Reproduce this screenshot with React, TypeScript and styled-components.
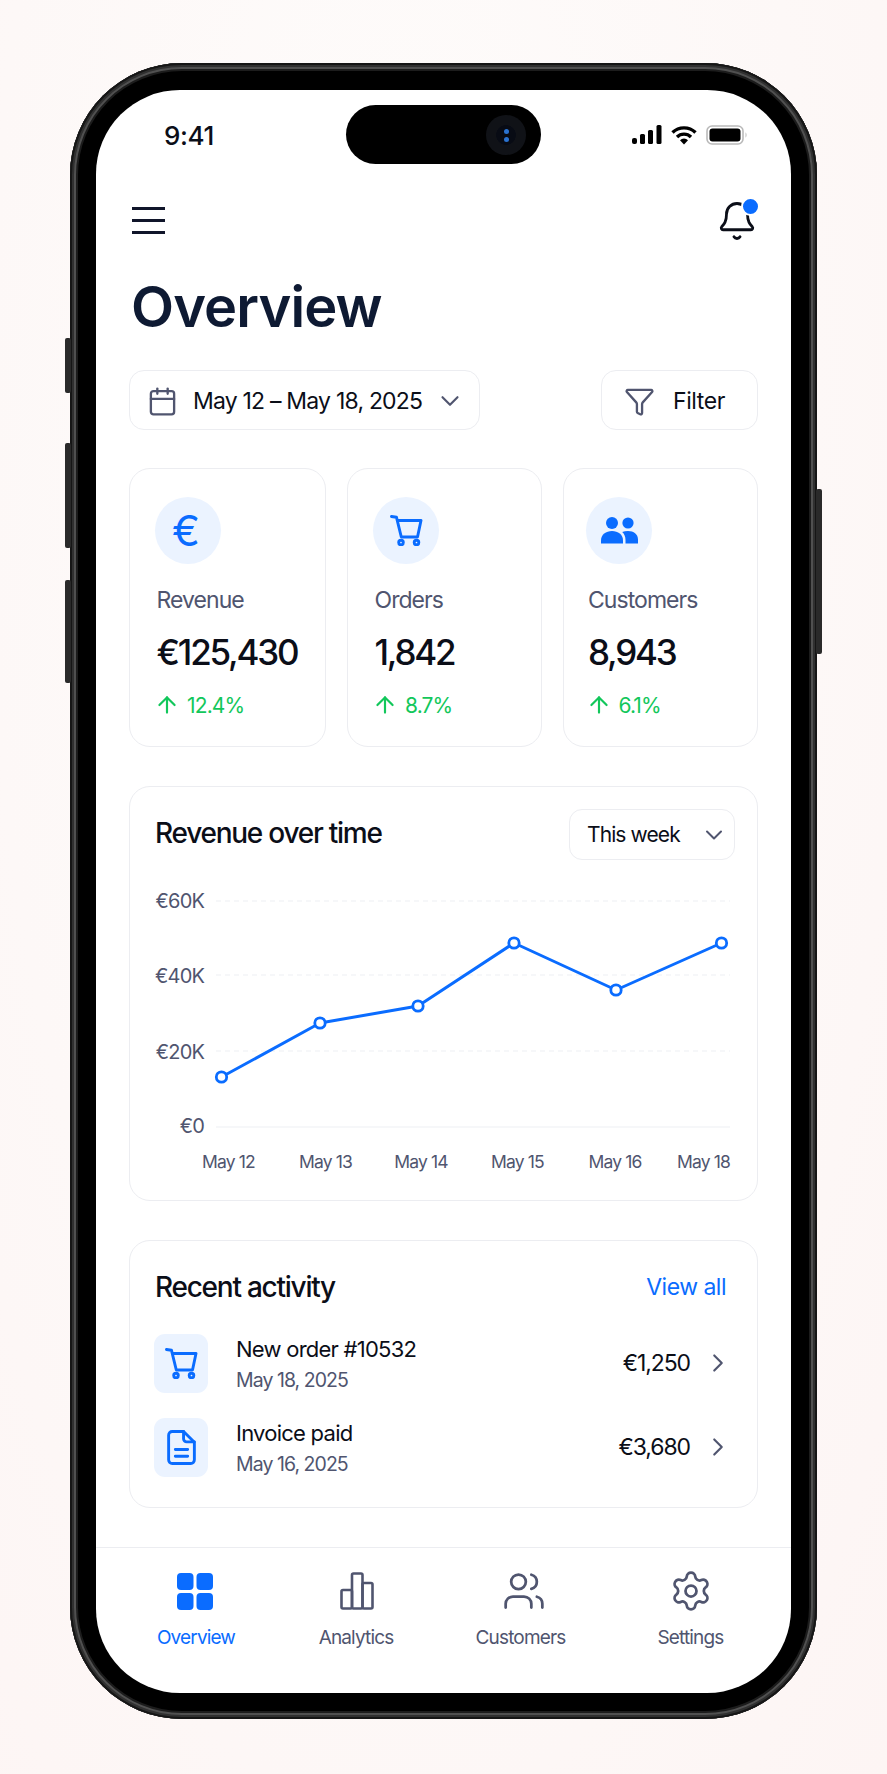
import React from 'react';
import styled, { createGlobalStyle } from 'styled-components';
import { ArrowUp, Calendar, ChevronDown, ChevronRight, Funnel, Bell, Settings, Users } from 'lucide-react';

const Global = createGlobalStyle`
  html, body { margin: 0; padding: 0; }
  body { font-family: Inter, "Noto Sans", sans-serif; background: #fff; }
  * { box-sizing: border-box; }
`;

const BLUE = '#0a6cff';
const MUTED = '#50556f';
const INK = '#0b0e18';
const LINE = '#ecedf1';
const TILE = '#ebf3ff';

const Page = styled.div`
  width: 887px;
  height: 1774px;
  padding: 63px 0 0 70px;
  overflow: hidden;
  background: radial-gradient(ellipse at 45% 25%, #fefcfb 0%, #fdf8f7 60%, #fdf5f4 100%);
`;
const Frame = styled.div`
  position: relative;
  width: 747px;
  height: 1656px;
  padding: 27px 26px 26px;
  border-radius: 112px;
  background: #000;
  box-shadow: inset 0 0 0 2px #161616, inset 0 0 0 4px #303030, inset 0 0 0 6px #505050, inset 0 0 0 8px #1c1c1c;
`;
const SideButton = styled.div<{ $top: number; $height: number; $right?: boolean }>`
  position: absolute;
  top: ${p => p.$top}px;
  height: ${p => p.$height}px;
  width: 6px;
  ${p => (p.$right ? 'right: -5px;' : 'left: -5px;')}
  border-radius: 2px;
  background: #2a2a2a;
`;
const Screen = styled.div`
  position: relative;
  width: 695px;
  height: 1603px;
  border-radius: 84px;
  background: #fff;
  overflow: hidden;
  display: flex;
  flex-direction: column;
`;
const Island = styled.div`
  position: absolute;
  top: 15px;
  left: 250px;
  width: 195px;
  height: 59px;
  border-radius: 30px;
  background: #000;
`;
const Lens = styled.div`
  position: absolute;
  top: 10px;
  right: 15px;
  width: 40px;
  height: 40px;
  border-radius: 50%;
  background: radial-gradient(circle, #080b14 0 34%, #101217 36% 100%);
  display: flex;
  flex-direction: column;
  align-items: center;
  justify-content: center;
  gap: 3px;
`;
const LensDot = styled.span`
  width: 5px;
  height: 5px;
  border-radius: 50%;
  background: #2a72d0;
`;
const StatusBar = styled.div`
  flex: none;
  height: 90px;
  padding: 0 43px 0 68px;
  display: flex;
  align-items: center;
  justify-content: space-between;
`;
const Clock = styled.span`
  font-size: 26px;
  font-weight: 500;
  color: ${INK};
  letter-spacing: -0.4px;
`;
const StatusIcons = styled.div`
  display: flex;
  align-items: center;
  gap: 9px;
`;
const Main = styled.div`
  flex: 1;
  padding: 22px 33px 0;
`;
const TopRow = styled.div`
  height: 38px;
  display: flex;
  align-items: center;
  justify-content: space-between;
`;
const Burger = styled.svg`
  margin: 0 0 2px 3px;
  display: block;
`;
const BellWrap = styled.div`
  position: relative;
  width: 42px;
  height: 42px;
  color: ${INK};
`;
const BellDot = styled.span`
  position: absolute;
  top: -3px;
  right: -2px;
  width: 19px;
  height: 19px;
  border: 2px solid #fff;
  border-radius: 50%;
  background: ${BLUE};
`;
const Title = styled.h1`
  margin: 39px 0 0 2px;
  font-size: 56px;
  line-height: 56px;
  font-weight: 600;
  letter-spacing: -0.9px;
  color: #0e1a33;
`;
const ToolRow = styled.div`
  margin-top: 35px;
  display: flex;
  justify-content: space-between;
`;
const ToolButton = styled.div<{ $width: number }>`
  width: ${p => p.$width}px;
  height: 60px;
  padding-top: 2px;
  border: 1.5px solid ${LINE};
  border-radius: 15px;
  display: flex;
  align-items: center;
  color: ${MUTED};
`;
const DateIcon = styled.span`
  display: flex;
  margin-left: 17px;
`;
const FilterIcon = styled.span`
  display: flex;
  margin-left: 22px;
`;
const ToolText = styled.span<{ $gap: number; $track: number }>`
  margin-left: ${p => p.$gap}px;
  font-size: 23px;
  letter-spacing: ${p => p.$track}px;
  color: ${INK};
`;
const ToolChevron = styled.span`
  display: flex;
  margin-left: auto;
  margin-right: 14px;
  color: ${MUTED};
`;
const Stats = styled.div`
  margin-top: 38px;
  display: grid;
  grid-template-columns: 197px 195px 195px;
  gap: 21px;
`;
const Card = styled.div`
  border: 1.5px solid ${LINE};
  border-radius: 21px;
  background: #fff;
`;
const StatCard = styled(Card)<{ $pad: number }>`
  height: 279px;
  padding: 28px 0 0 ${p => p.$pad}px;
`;
const StatCircle = styled.div<{ $shift: number }>`
  width: 66px;
  height: 67px;
  margin-left: ${p => p.$shift}px;
  border-radius: 50%;
  background: ${TILE};
  color: ${BLUE};
  display: flex;
  align-items: center;
  justify-content: center;
`;
const EuroGlyph = styled.span`
  font-size: 42px;
  font-weight: 400;
  line-height: 1;
  margin-left: -4px;
`;
const StatLabel = styled.div`
  margin-top: 21px;
  font-size: 23px;
  line-height: 30px;
  letter-spacing: -0.95px;
  color: ${MUTED};
`;
const StatValue = styled.div`
  margin-top: 17px;
  font-size: 35px;
  line-height: 40px;
  font-weight: 500;
  letter-spacing: -2.2px;
  color: ${INK};
`;
const StatDelta = styled.div`
  margin-top: 19px;
  height: 28px;
  display: flex;
  align-items: center;
  gap: 7px;
  font-size: 21px;
  letter-spacing: -0.85px;
  color: #12c75b;
`;
const DeltaArrow = styled.span`
  display: flex;
  margin-left: -2.5px;
`;
const ChartCard = styled(Card)`
  margin-top: 39px;
  height: 415px;
`;
const ChartHead = styled.div`
  padding: 22px 22px 0 24px;
  display: flex;
  align-items: center;
  justify-content: space-between;
`;
const CardTitle = styled.h2`
  margin: 0 0 3px 1px;
  font-size: 28px;
  line-height: 34px;
  font-weight: 500;
  letter-spacing: -1.25px;
  color: ${INK};
`;
const Select = styled.div`
  width: 166px;
  height: 51px;
  padding-left: 17px;
  border: 1.5px solid ${LINE};
  border-radius: 13px;
  display: flex;
  align-items: center;
  justify-content: space-between;
  font-size: 21px;
  letter-spacing: -0.9px;
  color: ${INK};
`;
const SelectChevron = styled.span`
  display: flex;
  margin-right: 6px;
  color: ${MUTED};
`;
const ChartSvg = styled.svg`
  display: block;
  margin-top: -1px;
`;
const AxisText = styled.text<{ $size: number }>`
  font-family: Inter, sans-serif;
  font-size: ${p => p.$size}px;
  letter-spacing: -0.85px;
  fill: ${MUTED};
  dominant-baseline: central;
`;
const ActivityCard = styled(Card)`
  margin-top: 39px;
  height: 268px;
  padding: 29px 0 0 24px;
`;
const ActivityHead = styled.div`
  padding-right: 31px;
  display: flex;
  align-items: center;
  justify-content: space-between;
`;
const ViewAll = styled.span`
  margin-bottom: 3px;
  font-size: 23px;
  letter-spacing: -0.5px;
  color: ${BLUE};
`;
const Rows = styled.div`
  margin-top: 27px;
  display: flex;
  flex-direction: column;
  gap: 25px;
`;
const Row = styled.div`
  height: 59px;
  padding-right: 24px;
  display: flex;
  align-items: center;
`;
const RowTile = styled.div`
  flex: none;
  width: 54px;
  height: 59px;
  border-radius: 11px;
  background: ${TILE};
  color: ${BLUE};
  display: flex;
  align-items: center;
  justify-content: center;
`;
const RowText = styled.div`
  margin-left: 28px;
  flex: 1;
  align-self: flex-start;
`;
const RowTitle = styled.div`
  font-size: 22px;
  line-height: 30px;
  letter-spacing: -0.75px;
  color: ${INK};
`;
const RowDate = styled.div`
  margin-top: 2px;
  font-size: 19.5px;
  line-height: 28px;
  letter-spacing: -0.95px;
  color: ${MUTED};
`;
const RowAmount = styled.div`
  margin-bottom: 2px;
  font-size: 23px;
  letter-spacing: -1.1px;
  color: ${INK};
`;
const RowChevron = styled.span`
  display: flex;
  margin: 0 0 2px 13px;
  color: ${MUTED};
`;
const Nav = styled.nav`
  flex: none;
  height: 146px;
  padding: 21px 0 0 20px;
  border-top: 1.5px solid ${LINE};
  display: grid;
  grid-template-columns: 160px 160px 169px 171px;
  align-items: start;
`;
const NavItem = styled.div<{ $active?: boolean }>`
  display: flex;
  flex-direction: column;
  align-items: center;
  color: ${p => (p.$active ? BLUE : MUTED)};
`;
const NavIcon = styled.div<{ $shift: number }>`
  height: 44px;
  margin-left: ${p => p.$shift}px;
  display: flex;
  align-items: center;
  justify-content: center;
`;
const NavLabel = styled.span`
  margin-top: 12px;
  font-size: 19px;
  line-height: 26px;
  letter-spacing: -0.85px;
`;

const Signal = () => (
  <svg width="30" height="20" viewBox="0 0 30 20" fill="#000">
    <rect x="0" y="13" width="5" height="6" rx="2" />
    <rect x="8" y="9" width="5" height="10" rx="1.5" />
    <rect x="16" y="5" width="5" height="14" rx="1.5" />
    <rect x="24.5" y="0" width="5" height="19" rx="1.5" />
  </svg>
);
const Wifi = () => (
  <svg width="26" height="20" viewBox="0 0 26 20" fill="none" stroke="#000" strokeWidth="3.4">
    <path d="M1.5 7.5a16.5 16.5 0 0 1 23 0" />
    <path d="M6 12a10 10 0 0 1 14 0" />
    <path d="M13 19.5l-4-4.2a5.6 5.6 0 0 1 8 0z" fill="#000" stroke="none" />
  </svg>
);
const Battery = () => (
  <svg width="42" height="20" viewBox="0 0 42 20">
    <rect x="1" y="1" width="36" height="18" rx="5" fill="none" stroke="#b9b9b9" strokeWidth="1.6" />
    <rect x="3.5" y="3.5" width="31" height="13" rx="3" fill="#000" />
    <path d="M39.5 7.5c1.4.4 1.4 4.6 0 5z" fill="#bdbdbd" />
  </svg>
);
const Cart = () => (
  <svg width="33" height="31" viewBox="0 0 33 31" fill="none" stroke="currentColor" strokeWidth="2.9" strokeLinecap="round" strokeLinejoin="round">
    <path d="M1.500 1.500l5 .8 4.800 19.700h16.200l3.500-16.500H7.500" />
    <circle cx="11" cy="27.500" r="2.300" />
    <circle cx="26.500" cy="27.500" r="2.300" />
  </svg>
);
const Doc = () => (
  <svg width="29" height="35" viewBox="0 0 28 34" fill="none" stroke="currentColor" strokeWidth="2.800" strokeLinecap="round" strokeLinejoin="round">
    <path d="M5 1.500h11l10.500 10.500v17a3.500 3.500 0 0 1-3.500 3.500H5a3.500 3.500 0 0 1-3.500-3.500V5A3.500 3.500 0 0 1 5 1.500z" />
    <path d="M16 1.500v7a3 3 0 0 0 3 3h7.500" />
    <path d="M8 19h12M8 25.500h12" />
  </svg>
);
const UsersSolid = () => (
  <svg width="37" height="27" viewBox="0 0 37 27" fill={BLUE}>
    <circle cx="11" cy="6" r="6" />
    <circle cx="27" cy="6" r="5.600" />
    <path d="M0 26.500v-3C0 17.500 5 14 11 14s11 3.500 11 9.500v3z" />
    <path d="M24.500 26.500v-3.500c0-3.500-1.200-6-3.300-8 1.700-.7 3.700-1 5.800-1 5.700 0 10 3 10 8.500v4z" />
  </svg>
);
const GridIcon = () => (
  <svg width="36" height="37" viewBox="0 0 36 37" fill={BLUE}>
    <rect x="0" y="0" width="16.500" height="17" rx="4" />
    <rect x="19.500" y="0" width="16.500" height="17" rx="4" />
    <rect x="0" y="20" width="16.500" height="17" rx="4" />
    <rect x="19.500" y="20" width="16.500" height="17" rx="4" />
  </svg>
);
const BarsIcon = () => (
  <svg width="34" height="38" viewBox="0 0 34 38" fill="none" stroke={MUTED} strokeWidth="2.600" strokeLinejoin="round">
    <rect x="1.500" y="18" width="10.500" height="18.500" rx="1.500" />
    <rect x="12" y="1.500" width="10.500" height="35" rx="1.500" />
    <rect x="22.500" y="11" width="10" height="25.500" rx="1.500" />
  </svg>
);

const gridYs = [42, 116, 192, 268];
const yLabels = [
  { t: '€60K', y: 42 },
  { t: '€40K', y: 117 },
  { t: '€20K', y: 193 },
  { t: '€0', y: 267 },
];
const xLabels = [
  { t: 'May 12', x: 97.5 },
  { t: 'May 13', x: 194.5 },
  { t: 'May 14', x: 290 },
  { t: 'May 15', x: 386.5 },
  { t: 'May 16', x: 484 },
  { t: 'May 18', x: 572.5 },
];
const points: [number, number][] = [
  [90.5, 218],
  [189, 164],
  [287, 147],
  [383, 84],
  [485, 131],
  [590.5, 84],
];

const stats = [
  { label: 'Revenue', value: '€125,430', delta: '12.4%', icon: <EuroGlyph>€</EuroGlyph>, pad: 26.5, shift: -1.5 },
  { label: 'Orders', value: '1,842', delta: '8.7%', icon: <Cart />, pad: 26.5, shift: -1.5 },
  { label: 'Customers', value: '8,943', delta: '6.1%', icon: <UsersSolid />, pad: 24, shift: -2 },
];
const rows = [
  { title: 'New order #10532', date: 'May 18, 2025', amount: '€1,250', icon: <Cart /> },
  { title: 'Invoice paid', date: 'May 16, 2025', amount: '€3,680', icon: <Doc /> },
];
const nav = [
  { label: 'Overview', icon: <GridIcon />, active: true, shift: -2 },
  { label: 'Analytics', icon: <BarsIcon />, shift: 2 },
  { label: 'Customers', icon: <Users size={44} strokeWidth={1.5} />, shift: 6 },
  { label: 'Settings', icon: <Settings size={44} strokeWidth={1.5} />, shift: 0 },
];

export default function App() {
  return (
    <Page>
      <Global />
      <Frame>
        <SideButton $top={275} $height={55} />
        <SideButton $top={380} $height={105} />
        <SideButton $top={517} $height={103} />
        <SideButton $right $top={426} $height={165} />
        <Screen>
          <Island>
            <Lens>
              <LensDot />
              <LensDot />
            </Lens>
          </Island>
          <StatusBar>
            <Clock>9:41</Clock>
            <StatusIcons>
              <Signal />
              <Wifi />
              <Battery />
            </StatusIcons>
          </StatusBar>
          <Main>
            <TopRow>
              <Burger width="35" height="27" viewBox="0 0 35 27" fill="none" stroke="#10152a" strokeWidth="3">
                <path d="M0 1.500h33M0 13.500h33M0 25.500h33" />
              </Burger>
              <BellWrap>
                <Bell size={42} strokeWidth={1.6} />
                <BellDot />
              </BellWrap>
            </TopRow>
            <Title>Overview</Title>
            <ToolRow>
              <ToolButton $width={351}>
                <DateIcon><Calendar size={31} strokeWidth={1.8} /></DateIcon>
                <ToolText $gap={15} $track={-0.8}>May 12 – May 18, 2025</ToolText>
                <ToolChevron><ChevronDown size={30} strokeWidth={1.7} /></ToolChevron>
              </ToolButton>
              <ToolButton $width={157}>
                <FilterIcon><Funnel size={31} strokeWidth={1.8} /></FilterIcon>
                <ToolText $gap={18} $track={-0.4}>Filter</ToolText>
              </ToolButton>
            </ToolRow>
            <Stats>
              {stats.map(s => (
                <StatCard key={s.label} $pad={s.pad}>
                  <StatCircle $shift={s.shift}>{s.icon}</StatCircle>
                  <StatLabel>{s.label}</StatLabel>
                  <StatValue>{s.value}</StatValue>
                  <StatDelta>
                    <DeltaArrow><ArrowUp size={26} strokeWidth={2} /></DeltaArrow>
                    {s.delta}
                  </StatDelta>
                </StatCard>
              ))}
            </Stats>
            <ChartCard>
              <ChartHead>
                <CardTitle>Revenue over time</CardTitle>
                <Select>
                  This week
                  <SelectChevron><ChevronDown size={28} strokeWidth={1.7} /></SelectChevron>
                </Select>
              </ChartHead>
              <ChartSvg width="626" height="340" viewBox="-1 0 626 340">
                {gridYs.map((y, i) => (
                  <line key={y} x1="85" x2="599" y1={y} y2={y} stroke="#eef0f3" strokeWidth="1.200" strokeDasharray={i < 3 ? '5 4' : undefined} />
                ))}
                {yLabels.map(l => (
                  <AxisText key={l.t} $size={20} x="73" y={l.y} textAnchor="end">{l.t}</AxisText>
                ))}
                {xLabels.map(l => (
                  <AxisText key={l.t} $size={17.5} x={l.x} y="302" textAnchor="middle">{l.t}</AxisText>
                ))}
                <polyline points={points.map(p => p.join(',')).join(' ')} fill="none" stroke={BLUE} strokeWidth="3" strokeLinejoin="round" />
                {points.map(p => (
                  <circle key={p[0]} cx={p[0]} cy={p[1]} r="5.200" fill="#fff" stroke={BLUE} strokeWidth="2.800" />
                ))}
              </ChartSvg>
            </ChartCard>
            <ActivityCard>
              <ActivityHead>
                <CardTitle>Recent activity</CardTitle>
                <ViewAll>View all</ViewAll>
              </ActivityHead>
              <Rows>
                {rows.map(r => (
                  <Row key={r.title}>
                    <RowTile>{r.icon}</RowTile>
                    <RowText>
                      <RowTitle>{r.title}</RowTitle>
                      <RowDate>{r.date}</RowDate>
                    </RowText>
                    <RowAmount>{r.amount}</RowAmount>
                    <RowChevron><ChevronRight size={30} strokeWidth={1.7} /></RowChevron>
                  </Row>
                ))}
              </Rows>
            </ActivityCard>
          </Main>
          <Nav>
            {nav.map(n => (
              <NavItem key={n.label} $active={n.active}>
                <NavIcon $shift={n.shift}>{n.icon}</NavIcon>
                <NavLabel>{n.label}</NavLabel>
              </NavItem>
            ))}
          </Nav>
        </Screen>
      </Frame>
    </Page>
  );
}
